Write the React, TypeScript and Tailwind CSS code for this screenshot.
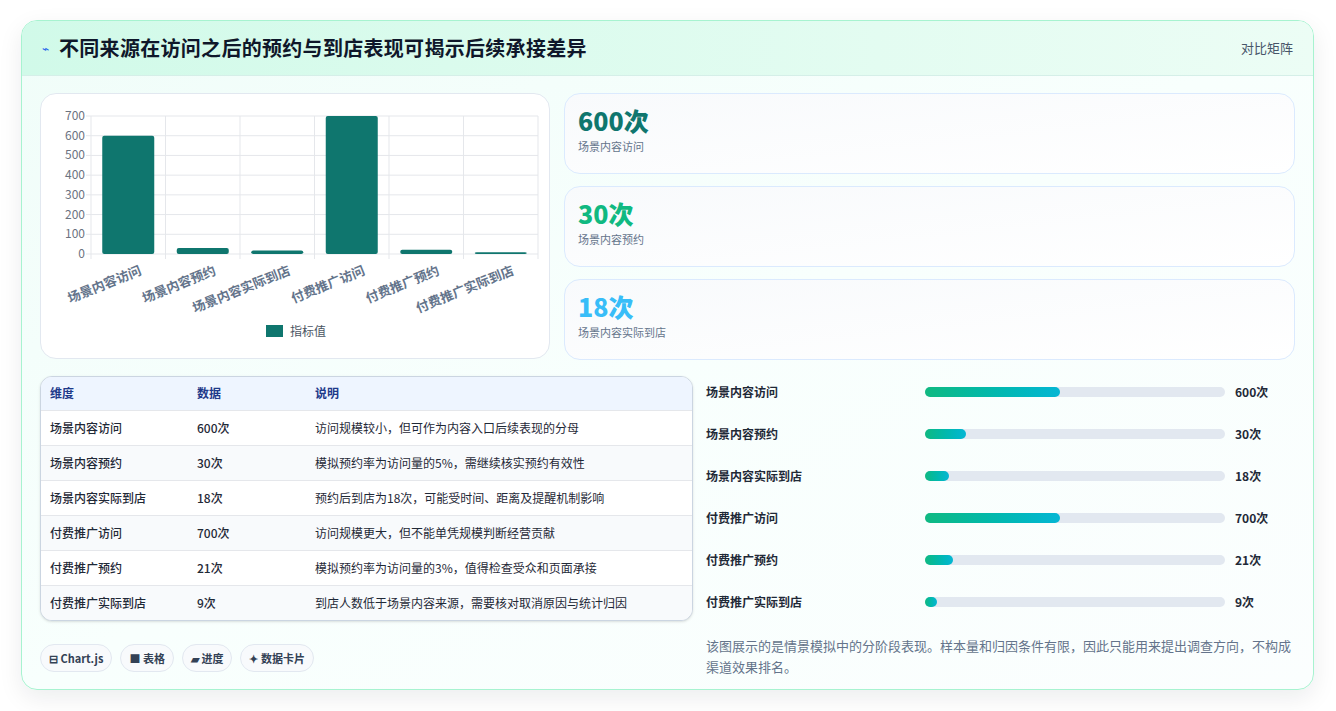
import React from 'react'

const font = { fontFamily: '"Noto Sans CJK SC", "Noto Sans", sans-serif' }

const bars = [
  { name: '场景内容访问', v: 600 },
  { name: '场景内容预约', v: 30 },
  { name: '场景内容实际到店', v: 18 },
  { name: '付费推广访问', v: 700 },
  { name: '付费推广预约', v: 21 },
  { name: '付费推广实际到店', v: 9 },
]

const rows = [
  ['场景内容访问', '600次', '访问规模较小，但可作为内容入口后续表现的分母'],
  ['场景内容预约', '30次', '模拟预约率为访问量的5%，需继续核实预约有效性'],
  ['场景内容实际到店', '18次', '预约后到店为18次，可能受时间、距离及提醒机制影响'],
  ['付费推广访问', '700次', '访问规模更大，但不能单凭规模判断经营贡献'],
  ['付费推广预约', '21次', '模拟预约率为访问量的3%，值得检查受众和页面承接'],
  ['付费推广实际到店', '9次', '到店人数低于场景内容来源，需要核对取消原因与统计归因'],
]

const progress = [
  ['场景内容访问', 45, '600次'],
  ['场景内容预约', 13.5, '30次'],
  ['场景内容实际到店', 8, '18次'],
  ['付费推广访问', 45, '700次'],
  ['付费推广预约', 9.3, '21次'],
  ['付费推广实际到店', 4, '9次'],
] as const

function Chart() {
  const x0 = 50, x1 = 497, yTop = 22, y0 = 160
  const step = (x1 - x0) / 6
  const sy = (v: number) => y0 - ((y0 - yTop) * v) / 700
  return (
    <svg width="509" height="265" className="block">
      {[0, 100, 200, 300, 400, 500, 600, 700].map((t) => (
        <g key={t}>
          <line x1={x0 - 5} x2={x1} y1={sy(t)} y2={sy(t)} stroke="#e5e7eb" />
          <text x={x0 - 6} y={sy(t) + 4} textAnchor="end" fontSize="12" fill="#6b7280" style={font}>{t}</text>
        </g>
      ))}
      {Array.from({ length: 7 }).map((_, i) => (
        <line key={i} x1={x0 + i * step} x2={x0 + i * step} y1={yTop} y2={y0 + 5} stroke="#e5e7eb" />
      ))}
      {bars.map((b, i) => {
        const cx = x0 + step * (i + 0.5)
        const y = sy(b.v)
        return (
          <g key={b.name}>
            <rect x={cx - 26} y={y} width="52" height={Math.max(y0 - y, 1.5)} rx="2" fill="#0f766e" />
            <text transform={`translate(${cx + 14},${y0 + 20}) rotate(-22)`} textAnchor="end" fontSize="13" fontWeight="600" fill="#64748b" style={font}>{b.name}</text>
          </g>
        )
      })}
      <rect x="225" y="231" width="17" height="12" fill="#0f766e" />
      <text x="249" y="242" fontSize="12" fill="#4b5563" style={font}>指标值</text>
    </svg>
  )
}

export default function App() {
  return (
    <div className="min-h-screen bg-white pt-5 pl-[21px] pr-[22px]" style={font}>
      <div className="rounded-2xl border border-[#a7f3d0] bg-gradient-to-br from-[#f0fdf9] via-[#f8fffd] to-[#fbfefe] shadow-[0_8px_24px_rgba(15,23,42,0.08)] overflow-hidden h-[670px]">
        <div className="h-[55px] flex items-center justify-between px-5 bg-gradient-to-r from-[#d1fae9] to-[#ecfdf5] border-b border-[#d5efe8]">
          <div className="flex items-center gap-2.5">
            <span className="text-[#2563eb] text-xs">⌁</span>
            <h1 className="text-[20px] font-bold text-[#0f172a] tracking-[0.3px]">不同来源在访问之后的预约与到店表现可揭示后续承接差异</h1>
          </div>
          <span className="text-[13px] text-[#475569]">对比矩阵</span>
        </div>
        <div className="px-[18px] pt-[17px]">
          <div className="flex gap-[14px]">
            <div className="w-[510px] h-[266px] rounded-2xl border border-[#e2e8f0] bg-white">
              <Chart />
            </div>
            <div className="flex-1 flex flex-col gap-[12px]">
              {[['600次', 'text-[#0f766e]', '场景内容访问'], ['30次', 'text-[#10b981]', '场景内容预约'], ['18次', 'text-[#38bdf8]', '场景内容实际到店']].map(([v, c, l]) => (
                <div key={l} className="h-[81px] rounded-2xl border border-[#dbeafe] bg-gradient-to-br from-[#f8fafc] to-white px-[13px] pt-[8px]">
                  <div className={`text-[25px] font-extrabold leading-[36px] ${c}`}>{v}</div>
                  <div className="text-[11px] text-[#64748b]">{l}</div>
                </div>
              ))}
            </div>
          </div>
          <div className="flex gap-[13px] mt-[16px]">
            <div className="w-[653px]">
              <div className="rounded-xl border border-[#cbd5e1] overflow-hidden shadow-sm bg-white">
                <table className="w-full text-[12px] text-left">
                  <thead className="bg-[#eef5ff] text-[#1e3a8a]">
                    <tr className="h-[33px]">
                      <th className="pl-[9px] w-[156px] font-semibold">维度</th>
                      <th className="w-[118px] font-semibold">数据</th>
                      <th className="font-semibold">说明</th>
                    </tr>
                  </thead>
                  <tbody className="text-[#1f2937]">
                    {rows.map((r, i) => (
                      <tr key={i} className={`h-[35px] border-t border-[#e5e7eb] ${i % 2 ? 'bg-[#f8fafc]' : 'bg-white'}`}>
                        <td className="pl-[9px] font-medium">{r[0]}</td>
                        <td className="font-medium">{r[1]}</td>
                        <td>{r[2]}</td>
                      </tr>
                    ))}
                  </tbody>
                </table>
              </div>
              <div className="flex gap-2 mt-[23px]">
                {['⊟ Chart.js', '■ 表格', '▰ 进度', '✦ 数据卡片'].map((c) => (
                  <span key={c} className="h-[28px] px-2 flex items-center rounded-full border border-[#e2e8f0] bg-[#f8fafc] text-[11px] font-semibold text-[#334155]">{c}</span>
                ))}
              </div>
            </div>
            <div className="flex-1 -mt-[5px]">
              <div className="flex flex-col">
                {progress.map(([l, w, v]) => (
                  <div key={l} className="h-[42px] flex items-center text-[12px] font-semibold text-[#1f2937]">
                    <span className="w-[219px]">{l}</span>
                    <div className="w-[300px] h-[10px] rounded-full bg-[#e2e8f0]">
                      <div className="h-full rounded-full bg-gradient-to-r from-[#10b981] to-[#06b6d4]" style={{ width: `${w}%` }} />
                    </div>
                    <span className="ml-[10px]">{v}</span>
                  </div>
                ))}
              </div>
              <p className="mt-[12px] text-[13px] leading-[21px] text-[#64748b] -mr-2">该图展示的是情景模拟中的分阶段表现。样本量和归因条件有限，因此只能用来提出调查方向，不构成渠道效果排名。</p>
            </div>
          </div>
        </div>
      </div>
    </div>
  )
}
